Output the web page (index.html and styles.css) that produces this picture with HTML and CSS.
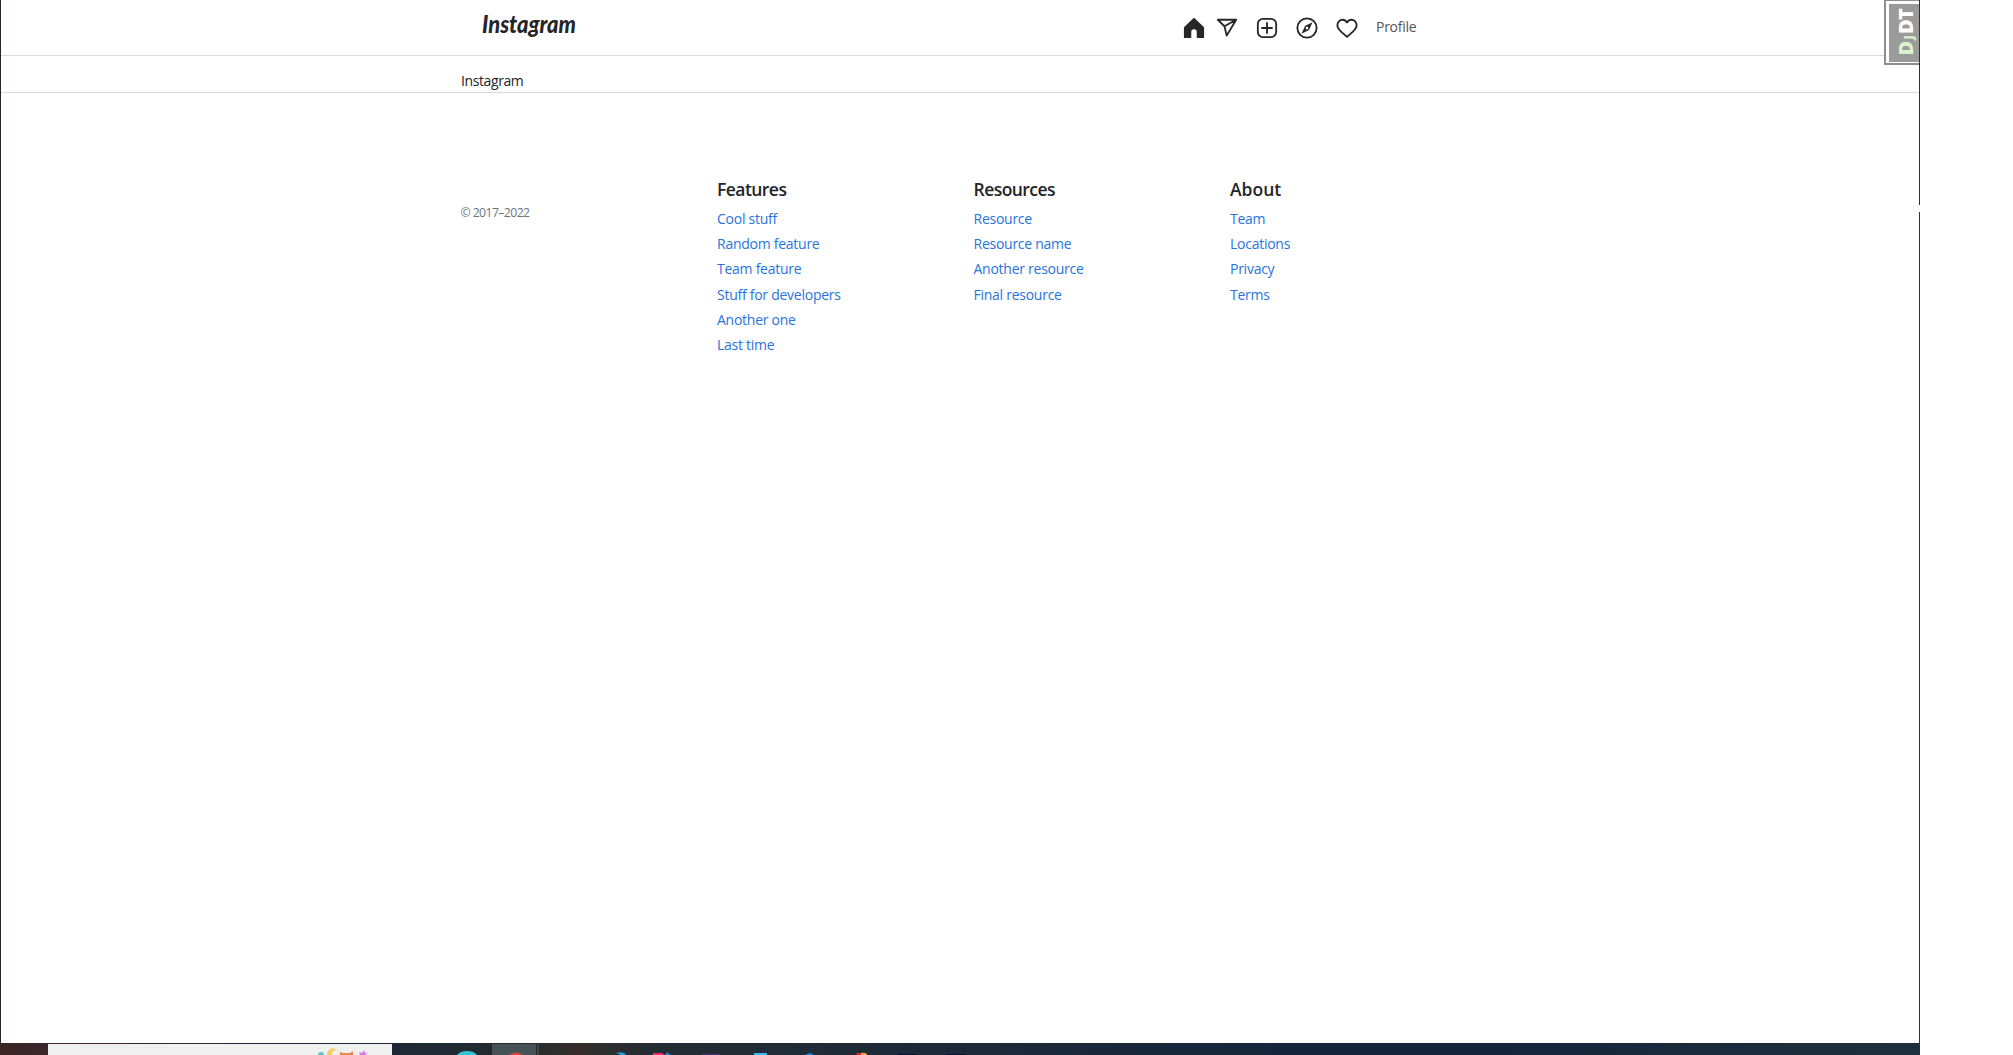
FILE: index.html
```
<!DOCTYPE html>
<html lang="en">
<head>
<meta charset="utf-8">
<title>Instagram</title>
<link rel="stylesheet" href="styles.css">
</head>
<body>
<div class="desktop">
  <div class="window">
    <header class="topbar">
      <a class="logo" href="#"><svg width="100" height="44" viewBox="0 0 100 44"><text class="logo-text" x="1" y="29" textLength="94" lengthAdjust="spacingAndGlyphs">Instagram</text></svg></a>
      <nav class="nav">
        <a class="home" href="#"><svg class="icon" viewBox="0 0 24 24"><path fill="currentColor" stroke="none" d="M22 23h-6.001a1 1 0 0 1-1-1v-5.455a2.997 2.997 0 1 0-5.993 0V22a1 1 0 0 1-1 1H2a1 1 0 0 1-1-1V11.543a1.002 1.002 0 0 1 .31-.724l10-9.543a1.001 1.001 0 0 1 1.38 0l10 9.543a1.002 1.002 0 0 1 .31.724V22a1 1 0 0 1-1 1z"/></svg></a>
        <a class="send" href="#"><svg class="icon" viewBox="0 0 24 24"><path d="M22 3 9.218 10.083M11.698 20.334 22 3.001H2l7.218 7.083z"/></svg></a>
        <a href="#"><svg class="icon" viewBox="0 0 24 24"><rect x="2" y="2" width="20" height="20" rx="5.6"/><path d="M6.5 12h11M12 6.5v11"/></svg></a>
        <a href="#"><svg class="icon" viewBox="0 0 24 24"><circle cx="12" cy="12" r="10.5"/><path fill="currentColor" stroke="none" fill-rule="evenodd" d="M18 5.8 14.2 14.2 6 18.2 9.8 9.8zM12 10.5a1.5 1.5 0 1 0 0 3 1.5 1.5 0 0 0 0-3z"/></svg></a>
        <a href="#"><svg class="icon" viewBox="0 0 24 24"><path d="M16.8 3c-2 0-3.6 1.1-4.8 3-1.200-1.900-2.800-3-4.800-3C4.100 3 1.500 5.700 1.500 9.100c0 3.100 2 5.100 4.300 7.100L12 21.700l6.200-5.500c2.300-2 4.300-4 4.300-7.100C22.500 5.700 19.900 3 16.800 3z"/></svg></a>
        <a class="profile" href="#">Profile</a>
      </nav>
    </header>
    <div class="subbar">Instagram</div>
    <footer class="footer">
      <small class="copyright">© 2017–2022</small>
      <section>
        <h5>Features</h5>
        <ul>
          <li><a href="#">Cool stuff</a></li>
          <li><a href="#">Random feature</a></li>
          <li><a href="#">Team feature</a></li>
          <li><a href="#">Stuff for developers</a></li>
          <li><a href="#">Another one</a></li>
          <li><a href="#">Last time</a></li>
        </ul>
      </section>
      <section>
        <h5>Resources</h5>
        <ul>
          <li><a href="#">Resource</a></li>
          <li><a href="#">Resource name</a></li>
          <li><a href="#">Another resource</a></li>
          <li><a href="#">Final resource</a></li>
        </ul>
      </section>
      <section>
        <h5 class="about">About</h5>
        <ul>
          <li><a href="#">Team</a></li>
          <li><a href="#">Locations</a></li>
          <li><a href="#">Privacy</a></li>
          <li><a href="#">Terms</a></li>
        </ul>
      </section>
    </footer>
    <div class="debug-handle"><svg width="30" height="58" viewBox="0 0 30 58"><text class="debug-text" transform="translate(23.500 51.500) rotate(-90)"><tspan class="green" x="0">D</tspan><tspan class="green small" x="16">J</tspan><tspan x="21.500">D</tspan><tspan x="35.500">T</tspan></text></svg></div>
  </div>
  <svg class="taskbar" width="1920" height="12" viewBox="0 0 1920 12">
    <defs>
      <linearGradient id="bar">
        <stop offset="0" stop-color="#3a2426"/><stop offset=".025" stop-color="#38282c"/>
        <stop offset=".2" stop-color="#1c2836"/><stop offset=".27" stop-color="#252a2e"/>
        <stop offset=".3" stop-color="#352d2c"/><stop offset=".34" stop-color="#222c33"/>
        <stop offset=".5" stop-color="#1b2938"/><stop offset=".75" stop-color="#15243b"/>
        <stop offset="1" stop-color="#1e303c"/>
      </linearGradient>
    </defs>
    <rect width="1920" height="12" fill="url(#bar)"/>
    <rect x="48" y="1" width="344" height="11" fill="#f1f0f1"/>
    <circle cx="321" cy="12" r="3" fill="#5fc4cc"/>
    <path d="M327 12c0-6 6-8 10-5-4 0-5 2-5 5z" fill="#f3cf62"/>
    <path d="M340 12V9l3 1h7l3-2v4z" fill="#e78b4d"/>
    <path d="m359 9 3 1 2-3 1 3h3l-3 2h-5z" fill="#d77be8"/>
    <path d="M457 12a11 7 0 0 1 20 0z" fill="#32c6d2"/>
    <rect x="492" y="1" width="44" height="11" fill="#465356"/>
    <rect x="537" y="1" width="2" height="11" fill="#3c4648"/>
    <path d="M509 12q7-5 14 0z" fill="#dd4638"/>
    <path d="M616 10q8-2 10 2h-5z" fill="#2499e1"/>
    <path d="M653 10h9l3 2h-12z" fill="#f02e68"/><path d="m665 12 2-3 4 3z" fill="#3872cc"/>
    <path d="M702 11h18v1h-18z" fill="#40347a"/>
    <path d="M754 10h13v2h-13z" fill="#36b9f2"/>
    <path d="M805 12q5-4 9 0z" fill="#1678ce"/>
    <path d="m856 10 6 0v2h-5z" fill="#c82c20"/><path d="M861 10q6-1 6 2h-6z" fill="#f3a63b"/>
    <path d="M898 11h18v1h-18zM947 11h18v1h-18z" fill="#071334"/>
  </svg>
</div>
</body>
</html>
```
FILE: styles.css
```
* { box-sizing: border-box; }
body {
  margin: 0;
  background: #fff;
  color: #212529;
  font: 14px/21px "Open Sans", sans-serif;
  letter-spacing: -.26px;
}
a { color: #2874dc; text-decoration: none; }
svg { display: block; }
.desktop { width: 1920px; height: 1055px; overflow: hidden; }
.window {
  position: relative;
  height: 1043px;
  border-left: 1px solid #20262b;
}
/* right window edge, interrupted for a few pixels */
.window::after {
  content: "";
  position: absolute;
  top: 0;
  right: 0;
  width: 1px;
  height: 100%;
  background: linear-gradient(#26332f 0 205px, #fff 205px 212px, #2c3436 212px);
}
.topbar {
  display: flex;
  justify-content: space-between;
  height: 56px;
  padding: 0 502px 0 480px;
  border-bottom: 1px solid #dbdbdb;
}
.logo { padding-top: 4px; }
.logo svg { overflow: visible; }
.logo-text {
  font: italic 900 24px Lato, sans-serif;
  letter-spacing: 0;
  fill: #262626;
}
.nav {
  display: flex;
  gap: 18px;
  padding-top: 17px;
  color: #262626;
}
.nav a { color: #262626; }
.icon {
  width: 22px;
  height: 22px;
  fill: none;
  stroke: currentColor;
  stroke-width: 2;
  stroke-linejoin: round;
  stroke-linecap: round;
}
.home { margin-right: -7px; }
.nav .profile { width: 42px; color: #555; line-height: 20px; }
.subbar {
  height: 37px;
  padding: 14px 0 0 460px;
  border-bottom: 1px solid #dbdbdb;
  letter-spacing: -.4px;
}
.footer {
  display: grid;
  grid-template-columns: repeat(4, 256.5px);
  padding: 86px 0 0 459.5px;
}
.copyright {
  padding-top: 24.500px;
  color: #6c757d;
  font-size: 12.25px;
  line-height: 18px;
  letter-spacing: -.6px;
}
.footer h5 {
  margin: 0 0 8px;
  font-size: 17.5px;
  font-weight: 600;
  line-height: 21px;
  letter-spacing: -.55px;
}
.footer .about { letter-spacing: 0; }
.footer ul { margin: 0; padding: 0; list-style: none; }
.footer li { margin-bottom: 4.200px; }
.debug-handle {
  position: absolute;
  top: 0;
  right: 1px;
  width: 35px;
  height: 65px;
  padding: 3px 0 0 3px;
  border: 1px solid #8d8d8d;
  border-width: 1px 0 2px 2px;
  background: #fff;
}
.debug-handle svg { background: #9b9b9b; }
.debug-text { font: 800 20px "Open Sans", sans-serif; fill: #fff; letter-spacing: 0; }
.debug-text .small { font-size: 12px; }
.green { fill: #daf3cf; }
```
